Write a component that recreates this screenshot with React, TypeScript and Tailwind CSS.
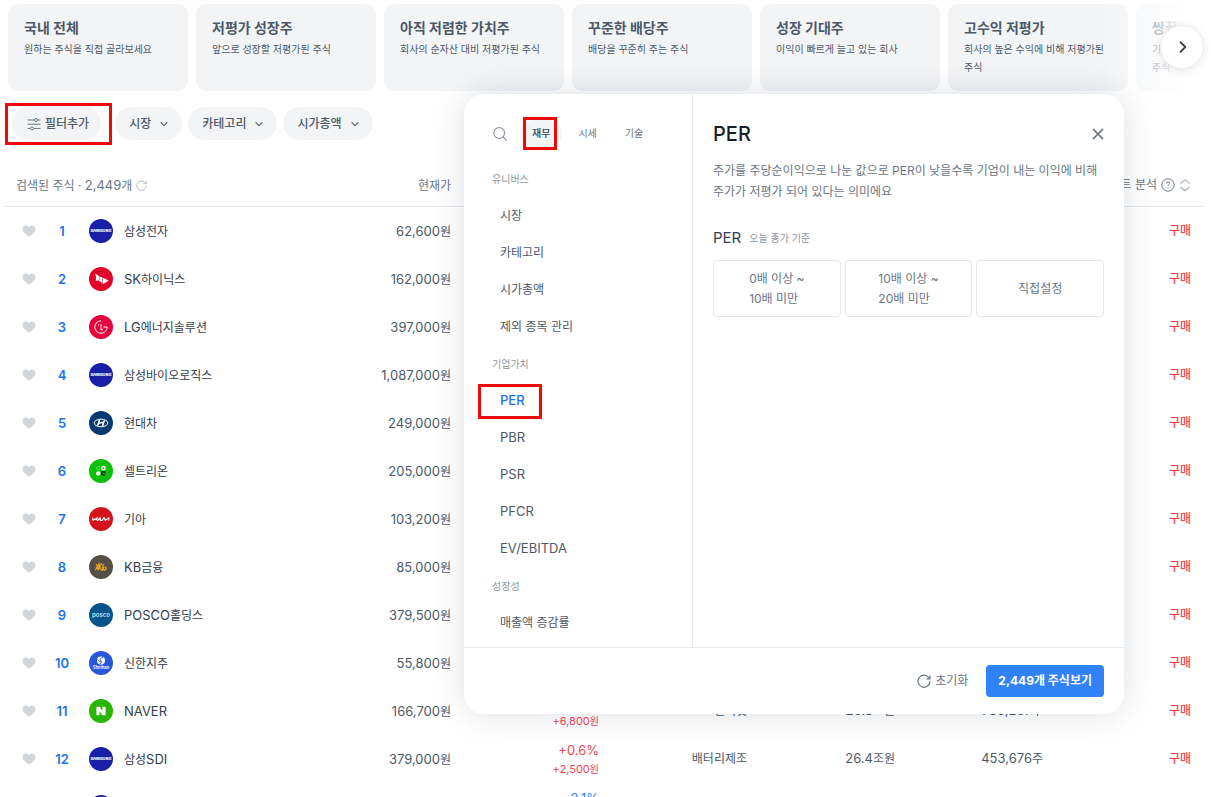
import React from "react";

const presets = [
  { title: "국내 전체", text: "원하는 주식을 직접 골라보세요" },
  { title: "저평가 성장주", text: "앞으로 성장할 저평가된 주식" },
  { title: "아직 저렴한 가치주", text: "회사의 순자산 대비 저평가된 주식" },
  { title: "꾸준한 배당주", text: "배당을 꾸준히 주는 주식" },
  { title: "성장 기대주", text: "이익이 빠르게 늘고 있는 회사" },
  { title: "고수익 저평가", text: "회사의 높은 수익에 비해 저평가된 주식" },
  { title: "쌍끌이 매수", text: "기관과 외국인이 함께 매수하는 주식" },
];

type Stock = {
  name: string;
  logo: LogoName;
  price: string;
  rate?: string;
  diff?: string;
  category?: string;
  cap?: string;
  volume?: string;
};

type LogoName =
  | "samsung" | "sk" | "lg" | "hyundai" | "celltrion" | "kia"
  | "kb" | "posco" | "shinhan" | "naver";

const stocks: Stock[] = [
  { name: "삼성전자", logo: "samsung", price: "62,600" },
  { name: "SK하이닉스", logo: "sk", price: "162,000" },
  { name: "LG에너지솔루션", logo: "lg", price: "397,000" },
  { name: "삼성바이오로직스", logo: "samsung", price: "1,087,000" },
  { name: "현대차", logo: "hyundai", price: "249,000" },
  { name: "셀트리온", logo: "celltrion", price: "205,000" },
  { name: "기아", logo: "kia", price: "103,200" },
  { name: "KB금융", logo: "kb", price: "85,000" },
  { name: "POSCO홀딩스", logo: "posco", price: "379,500" },
  { name: "신한지주", logo: "shinhan", price: "55,800" },
  { name: "NAVER", logo: "naver", price: "166,700", rate: "+4.2%", diff: "+6,800", category: "인터넷", cap: "26.8", volume: "780,267" },
  { name: "삼성SDI", logo: "samsung", price: "379,000", rate: "+0.6%", diff: "+2,500", category: "배터리제조", cap: "26.4", volume: "453,676" },
  { name: "삼성전자우", logo: "samsung", price: "52,000", rate: "-2.1%", diff: "-1,100", category: "반도체", cap: "42.2", volume: "900,120" },
];

const sections = [
  { title: "유니버스", items: ["시장", "카테고리", "시가총액", "제외 종목 관리"] },
  { title: "기업가치", items: ["PER", "PBR", "PSR", "PFCR", "EV/EBITDA"] },
  { title: "성장성", items: ["매출액 증감률"] },
];

const logoColors: Record<LogoName, string> = {
  samsung: "#1a1fa8",
  sk: "#e4002b",
  lg: "#e6003c",
  hyundai: "#063a70",
  celltrion: "#0bbf0b",
  kia: "#d31219",
  kb: "#545045",
  posco: "#05548a",
  shinhan: "#2a56dc",
  naver: "#28b600",
};

function LogoMark({ name }: { name: LogoName }) {
  switch (name) {
    case "samsung":
      return (
        <text x="12" y="13.4" fontSize="4" fontWeight="800" textAnchor="middle" fill="#fff" fontFamily="Inter, sans-serif">
          SAMSUNG
        </text>
      );
    case "sk":
      return (
        <g fill="#fff">
          <path d="M6.2 6.6 L9.8 9 Q10.6 11.4 9.6 13.4 L6.8 13.8 Q7.6 10.4 6.2 6.6 Z" />
          <path d="M10.2 9.4 L13.4 10.6 Q12.8 12.6 13.2 16 L10 13.8 Q11 11.4 10.2 9.4 Z" />
          <path d="M13.8 10.8 L19.8 13.6 L13.8 17.2 Q13 13.8 13.8 10.8 Z" />
        </g>
      );
    case "lg":
      return (
        <g fill="none" stroke="#fff" strokeWidth="1">
          <path d="M12 5.8 A6.2 6.2 0 1 0 18.2 12 H14.4" />
          <path d="M12 9 V14.8 H14" />
          <circle cx="9.6" cy="9.8" r="0.6" fill="#fff" stroke="none" />
        </g>
      );
    case "hyundai":
      return (
        <g fill="none" stroke="#fff">
          <ellipse cx="12" cy="12" rx="6.8" ry="3.8" strokeWidth="1" />
          <path d="M10.4 9 Q9.8 12.4 8.4 14.6 M15.6 9.4 Q14.2 11.6 13.6 15" strokeWidth="1.6" />
          <path d="M9.6 12.5 Q12 11.2 14.4 11.6" strokeWidth="1.3" />
        </g>
      );
    case "celltrion":
      return (
        <g>
          <circle cx="9.3" cy="9.2" r="1.7" fill="none" stroke="#7fe07f" strokeWidth="0.7" />
          <circle cx="14.4" cy="9.2" r="1.7" fill="none" stroke="#fff" strokeWidth="1.3" />
          <circle cx="9.3" cy="14.4" r="2.2" fill="#fff" />
          <circle cx="14.4" cy="14.4" r="1.7" fill="none" stroke="#0b2a10" strokeWidth="1.5" strokeDasharray="8.4 2.3" strokeDashoffset="-1.1" />
        </g>
      );
    case "kia":
      return (
        <path d="M3.8 10.6 V13.6 M3.8 13.6 L9 10.6 M6.6 12 L8.8 13.4 L11.2 10.6 V13.4 M11.2 13.4 H13.2 L15 10.6 L16.4 13.4 L19.8 10.6 V13.6" fill="none" stroke="#fff" strokeWidth="1.2" strokeLinejoin="round" />
      );
    case "kb":
      return (
        <g fill="none" stroke="#f2a51c" strokeWidth="1.2" strokeLinecap="round">
          <path d="M10 8 L9 15.2 M7.2 9.4 L12.4 15 M12.6 8.8 L6.4 14.6 M7 12 H12" />
          <path d="M14.2 9.4 L13.6 15" />
          <circle cx="15.6" cy="13.6" r="1.6" />
        </g>
      );
    case "posco":
      return (
        <text x="12" y="13.5" fontSize="6" fontWeight="600" textAnchor="middle" fill="#c9e2f2" fontFamily="Inter, sans-serif">
          posco
        </text>
      );
    case "shinhan":
      return (
        <g>
          <circle cx="12" cy="9.4" r="4" fill="#fff" />
          <path d="M14.2 6.4 Q9.6 7.6 11.6 9.4 Q14.4 11 10.4 12.8 M9 8.6 Q10.4 10.8 12 10.2" fill="none" stroke="#2a56dc" strokeWidth="1" />
          <text x="12" y="18.3" fontSize="4.2" fontWeight="600" textAnchor="middle" fill="#fff" fontFamily="Inter, sans-serif">
            Shinhan
          </text>
        </g>
      );
    case "naver":
      return <path d="M7.4 7.8 H10.6 L13.4 11.8 V7.8 H16.6 V16.2 H13.4 L10.6 12.2 V16.2 H7.4 Z" fill="#fff" />;
  }
}

function Logo({ name }: { name: LogoName }) {
  return (
    <svg viewBox="0 0 24 24" className="size-6 shrink-0" aria-hidden="true">
      <circle cx="12" cy="12" r="12" fill={logoColors[name]} />
      <LogoMark name={name} />
    </svg>
  );
}

function Heart() {
  return (
    <svg viewBox="0 0 14 12" className="h-3 w-3.5" fill="#d1d6db" aria-hidden="true">
      <path d="M7 11.6 C3.6 9.4 0.6 6.8 0.6 3.9 C0.6 2 2 0.6 3.8 0.6 C5.1 0.6 6.3 1.2 7 2.3 C7.7 1.2 8.9 0.6 10.2 0.6 C12 0.6 13.4 2 13.4 3.9 C13.4 6.8 10.4 9.4 7 11.6 Z" />
    </svg>
  );
}

function Refresh({ className }: { className: string }) {
  return (
    <svg viewBox="0 0 14 14" className={className} fill="none" stroke="currentColor" strokeWidth="1.2" aria-hidden="true">
      <path d="M12.4 4.6 A6 6 0 1 0 13 7.6" />
      <path d="M12.9 1.4 V4.8 H9.6" />
    </svg>
  );
}

function ChevronDown() {
  return (
    <svg viewBox="0 0 8 8" className="size-2" fill="none" stroke="#4e5968" strokeWidth="1.1" strokeLinecap="round" strokeLinejoin="round" aria-hidden="true">
      <path d="M1 2.6 L4 5.6 L7 2.6" />
    </svg>
  );
}

function Amount({ value, unit }: { value?: string; unit: string }) {
  if (!value) return null;
  return (
    <>
      <span className="text-[13px]">{value}</span>
      {unit}
    </>
  );
}

/** Sets Latin runs one step larger than the Korean text around them. */
function Mixed({ text }: { text: string }) {
  return (
    <>
      {text.split(/([A-Z/]+)/).map((part, i) =>
        i % 2 === 1 ? (
          <span key={i} className="text-[13px]">{part}</span>
        ) : (
          part
        ),
      )}
    </>
  );
}

function Presets() {
  return (
    <section className="relative overflow-hidden pt-1 pl-2">
      <div className="flex gap-2">
        {presets.map((p) => (
          <button key={p.title} className="flex h-[87px] w-[180px] shrink-0 flex-col rounded-[10px] bg-[#f2f4f6] px-4 pt-[14px] text-left text-[#4e5968]">
            <span className="text-sm leading-5 font-bold">{p.title}</span>
            <span className="mt-0.5 text-[10px] leading-[18px] break-keep">{p.text}</span>
          </button>
        ))}
      </div>
      <div className="pointer-events-none absolute inset-y-0 right-0 w-[107px] bg-linear-to-r from-transparent to-white to-75%" />
      <button aria-label="다음" className="absolute top-[25px] right-[7px] grid size-11 place-items-center rounded-full border border-[#eceef0] bg-white shadow-[0_2px_8px_rgba(0,27,55,0.1)]">
        <svg viewBox="0 0 12 12" className="size-3" fill="none" stroke="#333d4b" strokeWidth="1.8" strokeLinecap="round" strokeLinejoin="round" aria-hidden="true">
          <path d="M4.5 1.2 L9.3 6 L4.5 10.8" />
        </svg>
      </button>
    </section>
  );
}

function Filters() {
  return (
    <div className="flex gap-1.5 pt-4 pl-3 text-xs font-medium text-[#4e5968]">
      <div className="relative mr-2">
        <button className="flex h-[33px] items-center gap-1 rounded-full bg-[#f2f4f6] pr-3 pl-[15px]">
          <svg viewBox="0 0 14 14" className="size-3.5" fill="none" stroke="#6b7684" strokeWidth="1" aria-hidden="true">
            <path d="M0.5 3 H7.2 M10.8 3 H13.5 M0.5 7.2 H13.5 M0.5 11.4 H3.2 M6.8 11.4 H13.5" />
            <circle cx="9" cy="3" r="1.5" />
            <circle cx="5" cy="11.4" r="1.5" />
          </svg>
          필터추가
        </button>
        <div className="pointer-events-none absolute -top-1 -right-[11px] -bottom-[5px] -left-[7px] border-3 border-[#ee0a0a]" />
      </div>
      {["시장", "카테고리", "시가총액"].map((f) => (
        <button key={f} className="flex h-[33px] items-center gap-[9px] rounded-full bg-[#f2f4f6] px-3.5">
          {f}
          <ChevronDown />
        </button>
      ))}
    </div>
  );
}

function StockTable() {
  return (
    <div className="mt-6 mr-[7px] ml-1">
      <table className="w-full table-fixed border-separate border-spacing-0 text-xs text-[#4e5968]">
        <colgroup>
          <col className="w-12" />
          <col className="w-5" />
          <col />
          <col className="w-[148px]" />
          <col className="w-[148px]" />
          <col className="w-[148px]" />
          <col className="w-[148px]" />
          <col className="w-[148px]" />
          <col className="w-[148px]" />
        </colgroup>
        <thead>
          <tr className="h-[43px] text-[#6b7684] *:border-b *:border-[#e5e8eb]">
            <th colSpan={3} className="pt-0.5 pl-3 text-left font-normal">
              <div className="flex items-center gap-1">
                <span>
                  검색된 주식 · <span className="text-[13px]">2,449</span>개
                </span>
                <button aria-label="새로고침" className="text-[#b0b8c1]">
                  <Refresh className="size-[11px]" />
                </button>
              </div>
            </th>
            <th className="pt-0.5 pr-[13px] text-right font-normal">현재가</th>
            <th aria-label="등락률" />
            <th aria-label="카테고리" />
            <th aria-label="시가총액" />
            <th aria-label="거래량" />
            <th className="pr-[13px] font-normal">
              <div className="flex items-center justify-end gap-1">
                <span className="whitespace-nowrap">차트 분석</span>
                <svg viewBox="0 0 14 14" className="size-3.5" fill="none" stroke="#6b7684" strokeWidth="1" aria-hidden="true">
                  <circle cx="7" cy="7" r="6.2" />
                  <path d="M5.4 5.6 Q5.4 4 7 4 Q8.6 4 8.6 5.4 Q8.6 6.3 7.6 6.8 Q7 7.2 7 8" />
                  <circle cx="7" cy="9.8" r="0.5" fill="#6b7684" stroke="none" />
                </svg>
                <svg viewBox="0 0 12 14" className="h-3.5 w-3" fill="none" stroke="#b0b8c1" strokeWidth="1.3" strokeLinejoin="round" aria-hidden="true">
                  <path d="M1.4 5.6 L6 1.8 L10.6 5.6 M1.4 9 L6 12.8 L10.6 9" />
                </svg>
              </div>
            </th>
          </tr>
        </thead>
        <tbody>
          {stocks.map((s, i) => (
            <tr key={s.name} className="h-12">
              <td>
                <button aria-label={`${s.name} 관심 등록`} className="mx-auto block pl-0.5">
                  <Heart />
                </button>
              </td>
              <td className="pt-0.5 text-center text-[13px] font-semibold text-[#2272eb]">{i + 1}</td>
              <td className="pl-[17px]">
                <div className="flex items-center gap-[11px] text-[#333d4b]">
                  <Logo name={s.logo} />
                  <span className="pt-0.5 whitespace-nowrap">
                    <Mixed text={s.name} />
                  </span>
                </div>
              </td>
              <td className="pt-0.5 pr-[13px] text-right">
                <Amount value={s.price} unit="원" />
              </td>
              <td className={s.rate?.startsWith("-") ? "pr-[13px] text-right text-[#3182f6]" : "pr-[13px] text-right text-[#f04452]"}>
                {s.rate && (
                  <div className="flex flex-col">
                    <span className="text-[13px] leading-5">{s.rate}</span>
                    <span className="text-[10px] leading-[18px]">
                      <span className="text-[11px]">{s.diff}</span>원
                    </span>
                  </div>
                )}
              </td>
              <td className="pr-[13px] text-right">{s.category}</td>
              <td className="pr-[13px] text-right">
                <Amount value={s.cap} unit="조원" />
              </td>
              <td className="pr-[13px] text-right">
                <Amount value={s.volume} unit="주" />
              </td>
              <td className="pr-[13px] text-right">
                <button className="font-medium text-[#f04452]">구매</button>
              </td>
            </tr>
          ))}
        </tbody>
      </table>
    </div>
  );
}

function FilterPanel() {
  return (
    <div role="dialog" aria-label="필터추가" className="absolute top-[94px] left-[464px] flex w-[660px] flex-col rounded-[20px] bg-white shadow-[0_0_32px_rgba(0,27,55,0.14)]">
      <div className="flex">
        <nav className="w-[229px] border-r border-[#e5e8eb] pt-[25px] pb-[5px] pl-7">
          <div className="flex items-center gap-1 pb-[13px]">
            <button aria-label="검색" className="mr-2">
              <svg viewBox="0 0 16 16" className="size-4" fill="none" stroke="#8b95a1" strokeWidth="1.2" strokeLinecap="round" aria-hidden="true">
                <circle cx="7.2" cy="8" r="5.4" />
                <path d="M11.2 12 L14.4 15.2" />
              </svg>
            </button>
            <div className="relative">
              <button className="h-7 rounded-full bg-[#f2f4f6] px-3 text-[10px] font-medium text-[#333d4b]">재무</button>
              <div className="pointer-events-none absolute -top-0.5 right-[5px] -bottom-0.5 left-[3px] border-3 border-[#ee0a0a]" />
            </div>
            <button className="h-7 px-3 text-[10px] text-[#6b7684]">시세</button>
            <button className="h-7 px-3 text-[10px] text-[#6b7684]">기술</button>
          </div>
          {sections.map((s) => (
            <section key={s.title}>
              <h3 className="text-[10px] leading-9 text-[#8b95a1]">{s.title}</h3>
              <ul className="pt-px">
                {s.items.map((item) => (
                  <li key={item} className="relative flex h-[37px] items-center pl-2">
                    <button className={item === "PER" ? "text-xs font-medium text-[#2272eb]" : "text-xs text-[#4e5968]"}>
                      <Mixed text={item} />
                    </button>
                    {item === "PER" && <div className="pointer-events-none absolute -left-3.5 h-[35px] w-16 border-3 border-[#ee0a0a]" />}
                  </li>
                ))}
              </ul>
            </section>
          ))}
        </nav>
        <div className="flex-1 px-5 pt-[26px]">
          <div className="flex items-center justify-between text-[#191f28]">
            <h2 className="text-xl leading-7 font-medium">PER</h2>
            <button aria-label="닫기">
              <svg viewBox="0 0 12 12" className="size-3" fill="none" stroke="#6b7684" strokeWidth="1.6" strokeLinecap="round" aria-hidden="true">
                <path d="M1.4 1.4 L10.6 10.6 M10.6 1.4 L1.4 10.6" />
              </svg>
            </button>
          </div>
          <p className="mt-3 text-xs leading-[21px] text-[#6b7684]">
            주가를 주당순이익으로 나눈 값으로 PER이 낮을수록 기업이 내는 이익에 비해
            <br />
            주가가 저평가 되어 있다는 의미에요
          </p>
          <div className="mt-6 flex items-center gap-2">
            <h3 className="text-[15px] leading-6 text-[#333d4b]">PER</h3>
            <span className="text-[10px] text-[#8b95a1]">오늘 종가 기준</span>
          </div>
          <div className="mt-2.5 grid grid-cols-3 gap-1 text-xs leading-5 text-[#6b7684]">
            <button className="grid h-[57px] place-items-center rounded-sm border border-[#e5e8eb]">
              <span className="text-left">0배 이상 ~<br />10배 미만</span>
            </button>
            <button className="grid h-[57px] place-items-center rounded-sm border border-[#e5e8eb]">
              <span className="text-left">10배 이상 ~<br />20배 미만</span>
            </button>
            <button className="grid h-[57px] place-items-center rounded-sm border border-[#e5e8eb]">직접설정</button>
          </div>
        </div>
      </div>
      <footer className="flex h-[67px] items-center justify-end gap-[18px] border-t border-[#e5e8eb] pr-5 text-xs">
        <button className="flex items-center gap-1 text-[#6b7684]">
          <Refresh className="size-3.5" />
          초기화
        </button>
        <button className="h-8 rounded-sm bg-[#3182f6] px-3 font-bold text-white">2,449개 주식보기</button>
      </footer>
    </div>
  );
}

export default function App() {
  return (
    <main className="relative h-screen overflow-hidden bg-white font-['Inter','Noto_Sans_CJK_KR',sans-serif]">
      <Presets />
      <Filters />
      <StockTable />
      <FilterPanel />
    </main>
  );
}
